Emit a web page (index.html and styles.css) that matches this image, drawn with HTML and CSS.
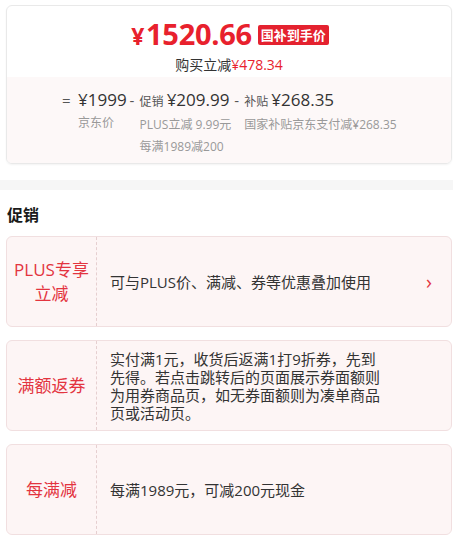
FILE: index.html
```html
<!DOCTYPE html>
<html lang="zh-CN">
<head>
    <meta charset="utf-8" />
    <title>价格与促销</title>
    <link rel="stylesheet" href="styles.css">
</head>
<body>
    <!--价格卡片-->
    <div class="price-card">
        <div class="price-top">
            <div class="final">
                <span class="final-num"><em>¥</em>1520.66</span>
                <span class="tag">国补到手价</span>
            </div>
            <div class="save">购买立减<span>¥478.34</span></div>
        </div>
        <div class="price-calc">
            <div class="col">
                <span class="op op-eq">=</span>
                <div class="val"><span class="num">¥1999</span></div>
                <div class="sub">京东价</div>
            </div>
            <div class="col">
                <span class="op">-</span>
                <div class="val"><span class="lbl">促销</span><span class="num">¥209.99</span></div>
                <div class="sub">PLUS立减 9.99元</div>
                <div class="sub">每满1989减200</div>
            </div>
            <div class="col">
                <span class="op">-</span>
                <div class="val"><span class="lbl">补贴</span><span class="num">¥268.35</span></div>
                <div class="sub">国家补贴京东支付减¥268.35</div>
            </div>
        </div>
    </div>

    <div class="divider"></div>

    <!--促销-->
    <div class="promo">
        <h3 class="promo-title">促销</h3>
        <div class="promo-item">
            <div class="promo-name">PLUS专享<br />立减</div>
            <div class="promo-desc">可与PLUS价、满减、券等优惠叠加使用</div>
            <div class="promo-arrow">›</div>
        </div>
        <div class="promo-item">
            <div class="promo-name">满额返券</div>
            <div class="promo-desc desc-long">实付满1元，收货后返满1打9折券，先到先得。若点击跳转后的页面展示券面额则为用券商品页，如无券面额则为凑单商品页或活动页。</div>
            <div class="promo-arrow"></div>
        </div>
        <div class="promo-item">
            <div class="promo-name">每满减</div>
            <div class="promo-desc">每满1989元，可减200元现金</div>
            <div class="promo-arrow"></div>
        </div>
    </div>
</body>
</html>
```

FILE: styles.css
```css
* {
    margin: 0;
    padding: 0;
}

body {
    font-family: "Open Sans", "Noto Sans CJK SC", sans-serif;
    color: #333;
    background-color: #fff;
    width: 453px;
    overflow: hidden;
}

.price-card {
    margin: 5px 1px 0 6px;
    border: 1px solid #e9e9e9;
    border-radius: 6px;
    overflow: hidden;
    box-shadow: 0 1px 2px rgba(0, 0, 0, 0.05);
}

.price-top {
    height: 71px;
    padding-top: 12px;
    box-sizing: border-box;
    text-align: center;
}

.final {
    display: flex;
    justify-content: center;
    align-items: center;
    height: 34px;
    padding-left: 2px;
}

.final-num {
    font-size: 29px;
    line-height: 34px;
    font-weight: bold;
    color: #e8212d;
    letter-spacing: -0.3px;
}

    .final-num em {
        font-style: normal;
        font-size: 23px;
        margin-right: 2px;
    }

.tag {
    margin-left: 6px;
    height: 20px;
    line-height: 20px;
    padding: 0 3px;
    background-color: #e4222f;
    color: #fff;
    font-size: 13px;
    font-weight: bold;
    border-radius: 2px;
}

.save {
    margin-top: 4px;
    font-size: 14px;
    line-height: 18px;
    color: #333;
}

    .save span {
        color: #e8212d;
    }

.price-calc {
    display: flex;
    background-color: #fdf8f8;
    height: 86px;
    padding: 12px 0 0 55px;
    box-sizing: border-box;
}

.col {
    display: grid;
    grid-template-columns: auto auto;
    align-content: start;
    margin-right: 3px;
}

.op {
    grid-row: 1;
    font-size: 15px;
    color: #555;
    width: 10px;
    line-height: 22px;
}

.op-eq {
    width: 16px;
}

.val {
    grid-column: 2;
    grid-row: 1;
    display: flex;
    align-items: baseline;
    line-height: 22px;
}

.num {
    font-size: 17px;
    color: #333;
}

.lbl {
    font-size: 12px;
    color: #555;
    margin-right: 3px;
}

.sub {
    grid-column: 2;
    font-size: 12px;
    color: #999;
    line-height: 21px;
    margin-top: 1px;
}

.divider {
    height: 10px;
    margin-top: 16px;
    background-color: #f6f6f6;
}

.promo {
    padding: 0 1px 0 6px;
}

.promo-title {
    font-size: 16px;
    font-weight: bold;
    color: #1a1a1a;
    padding: 14px 0 0 1px;
    line-height: 22px;
    height: 46px;
    box-sizing: border-box;
}

.promo-item {
    display: flex;
    align-items: stretch;
    min-height: 91px;
    margin-bottom: 13px;
    border: 1px solid #f1dfe0;
    border-radius: 6px;
    background-color: #fdf5f5;
    box-sizing: border-box;
}

.promo-name {
    width: 89px;
    flex-shrink: 0;
    display: flex;
    align-items: center;
    justify-content: center;
    text-align: center;
    font-size: 17px;
    line-height: 24px;
    color: #e3343f;
    border-right: 1px dashed #e6cfd0;
}

.promo-desc {
    flex: 1;
    display: flex;
    align-items: center;
    padding: 8px 0 8px 13px;
    font-size: 15px;
    line-height: 18px;
    color: #333;
}

.desc-long {
    padding-right: 14px;
}

.promo-arrow {
    width: 52px;
    flex-shrink: 0;
    display: flex;
    align-items: center;
    justify-content: center;
    font-size: 20px;
    color: #e3343f;
    padding-left: 8px;
    box-sizing: border-box;
}
```
